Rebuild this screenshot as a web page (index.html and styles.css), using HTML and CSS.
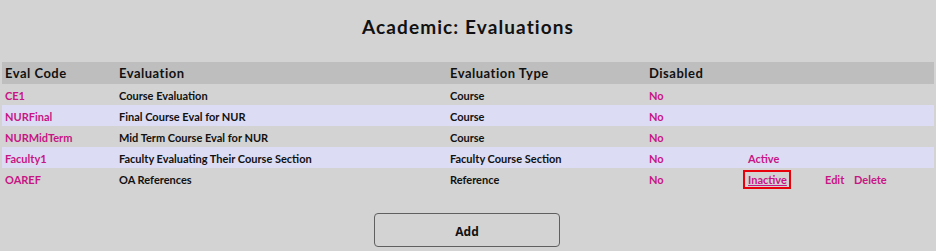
FILE: index.html
```html
<!DOCTYPE html>
<html lang="en">
<head>
    <meta charset="UTF-8">
    <meta name="viewport" content="width=device-width, initial-scale=1.0">
    <title>Academic: Evaluations</title>
    <link rel="stylesheet" href="styles.css">
</head>
<body>

    <div class="page">
        <h1>Academic: Evaluations</h1>

        <table class="evals">
            <colgroup>
                <col class="c-code">
                <col class="c-name">
                <col class="c-type">
                <col class="c-dis">
                <col class="c-state">
                <col class="c-edit">
                <col>
            </colgroup>
            <tr class="head">
                <th>Eval Code</th>
                <th>Evaluation</th>
                <th>Evaluation Type</th>
                <th>Disabled</th>
                <th></th>
                <th></th>
                <th></th>
            </tr>
            <tr>
                <td class="link">CE1</td>
                <td>Course Evaluation</td>
                <td>Course</td>
                <td class="link">No</td>
                <td></td>
                <td></td>
                <td></td>
            </tr>
            <tr class="alt">
                <td class="link">NURFinal</td>
                <td>Final Course Eval for NUR</td>
                <td>Course</td>
                <td class="link">No</td>
                <td></td>
                <td></td>
                <td></td>
            </tr>
            <tr>
                <td class="link">NURMidTerm</td>
                <td>Mid Term Course Eval for NUR</td>
                <td>Course</td>
                <td class="link">No</td>
                <td></td>
                <td></td>
                <td></td>
            </tr>
            <tr class="alt">
                <td class="link">Faculty1</td>
                <td>Faculty Evaluating Their Course Section</td>
                <td>Faculty Course Section</td>
                <td class="link">No</td>
                <td class="link">Active</td>
                <td></td>
                <td></td>
            </tr>
            <tr>
                <td class="link">OAREF</td>
                <td>OA References</td>
                <td>Reference</td>
                <td class="link">No</td>
                <td class="link"><a href="#" class="focused">Inactive</a></td>
                <td class="link">Edit</td>
                <td class="link">Delete</td>
            </tr>
        </table>

        <div class="actions">
            <button class="add-btn">Add</button>
        </div>
    </div>

</body>
</html>
```

FILE: styles.css
```css
body {
    margin: 0;
    background: #d3d3d3;
    font-family: "Lato", "Liberation Sans", sans-serif;
    color: #111;
}
.page {
    padding: 0 2px;
}
h1 {
    margin: 0;
    padding-top: 15px;
    height: 62px;
    box-sizing: border-box;
    text-align: center;
    font-size: 19px;
    font-weight: bold;
    letter-spacing: 1.1px;
}
.evals {
    width: 100%;
    border-collapse: collapse;
    table-layout: fixed;
}
.c-code { width: 114px; }
.c-name { width: 331px; }
.c-type { width: 199px; }
.c-dis { width: 99px; }
.c-state { width: 77px; }
.c-edit { width: 29px; }
th {
    background: #bebebe;
    height: 22px;
    padding: 0 3px;
    text-align: left;
    font-size: 13px;
    font-weight: bold;
    letter-spacing: 0.5px;
}
td {
    height: 20px;
    padding: 1px 3px 0;
    font-size: 11px;
    font-weight: bold;
    white-space: nowrap;
}
.alt td {
    background: #dcdcf4;
}
.link, .link a {
    color: #c71585;
}
.focused {
    display: inline-block;
    margin-left: -3px;
    padding: 1px 2px 1px 3px;
    outline: 2px solid #e8000b;
}
.actions {
    display: flex;
    justify-content: center;
    padding-top: 24px;
    padding-right: 2px;
}
.add-btn {
    width: 186px;
    height: 34px;
    padding-top: 3px;
    background: #d3d3d3;
    border: 1px solid #5f5f5f;
    border-radius: 4px;
    font-family: "Open Sans", "Liberation Sans", sans-serif;
    font-size: 12px;
    font-weight: bold;
    color: #111;
}
```
